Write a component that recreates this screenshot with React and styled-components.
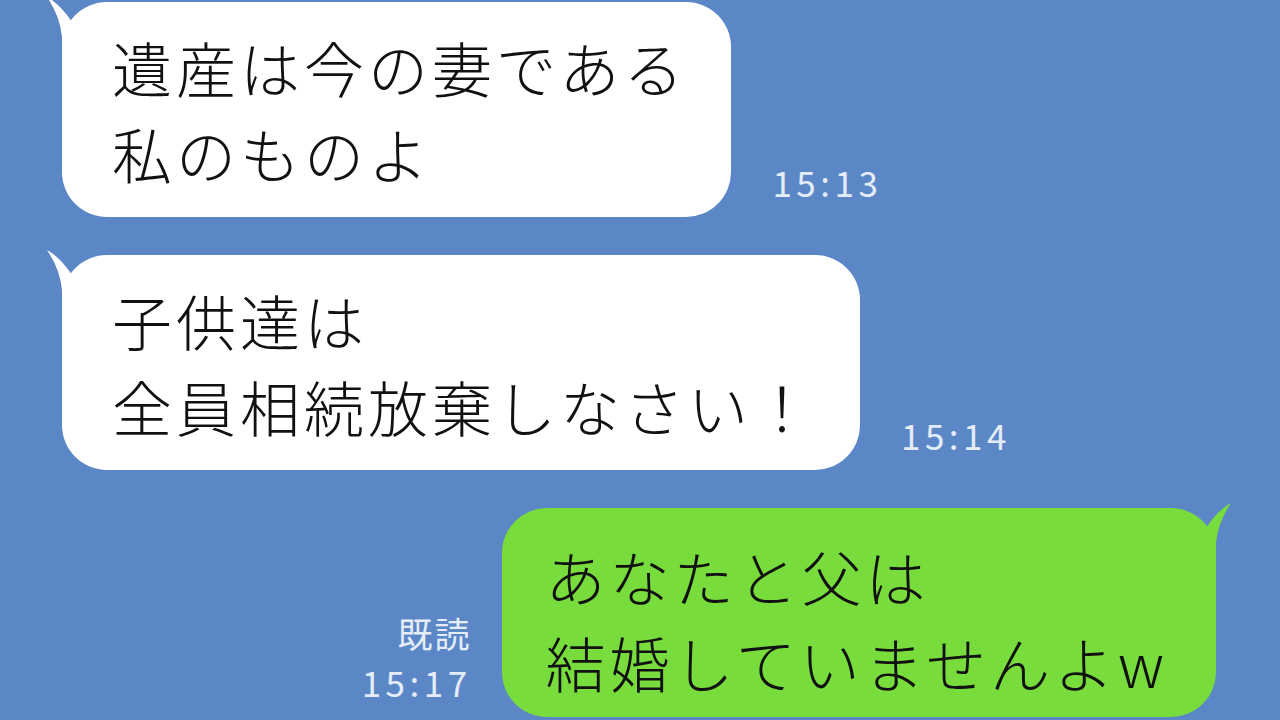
import styled, { createGlobalStyle } from "styled-components";

const GlobalStyle = createGlobalStyle`
  html, body {
    margin: 0;
    padding: 0;
    background: #5b87c7;
    overflow: hidden;
  }
  body {
    font-family: "Noto Sans CJK JP", "Noto Sans", sans-serif;
  }
`;

const Screen = styled.div`
  width: 1280px;
  height: 720px;
  overflow: hidden;
  background: #5b87c7;
  display: flex;
  flex-direction: column;
  gap: 38px;
  padding-top: 2px;
  box-sizing: border-box;
`;

const Row = styled.div`
  display: flex;
  align-items: flex-end;
  gap: ${({ $mine }) => ($mine ? "30px" : "41px")};
  justify-content: ${({ $mine }) => ($mine ? "flex-end" : "flex-start")};
  padding: ${({ $mine }) => ($mine ? "0 64px 0 0" : "0 0 0 62px")};
`;

const Bubble = styled.div`
  position: relative;
  background: ${({ $mine }) => ($mine ? "#78dc3c" : "#ffffff")};
  border-radius: 45px;
  padding: ${({ $mine }) => ($mine ? "25px 48px 12px 44px" : "22px 44px 21px 50px")};
  font-size: 60px;
  font-weight: 300;
  line-height: 86px;
  letter-spacing: 4px;
  color: #111;
  white-space: nowrap;
`;

const Tail = styled.svg`
  position: absolute;
  top: -6px;
  width: 40px;
  height: 60px;
  ${({ $mine }) =>
    $mine ? "right: -16px; transform: scaleX(-1);" : "left: -16px;"}
`;

const Meta = styled.div`
  display: flex;
  flex-direction: column;
  align-items: flex-end;
  margin-bottom: 18px;
  color: #e4ecf7;
  font-size: 35px;
  line-height: 1;
  letter-spacing: 4.5px;
`;

const Read = styled.div`
  font-size: 35px;
  margin-bottom: 14px;
  letter-spacing: 2px;
`;

const BubbleTail = ({ mine }) => (
  <Tail $mine={mine} viewBox="0 0 40 60">
    <path
      d="M1 1 Q14 8 26 26 L30 60 L16 60 L16 41 Q14 20 1 1 Z"
      fill={mine ? "#78dc3c" : "#ffffff"}
    />
  </Tail>
);

const messages = [
  { lines: ["遺産は今の妻である", "私のものよ"], time: "15:13" },
  { lines: ["子供達は", "全員相続放棄しなさい！"], time: "15:14" },
];

export default function App() {
  return (
    <>
      <GlobalStyle />
      <Screen>
        {messages.map((m) => (
          <Row key={m.time}>
            <Bubble>
              <BubbleTail />
              {m.lines.map((l) => (
                <div key={l}>{l}</div>
              ))}
            </Bubble>
            <Meta>{m.time}</Meta>
          </Row>
        ))}
        <Row $mine>
          <Meta>
            <Read>既読</Read>
            15:17
          </Meta>
          <Bubble $mine>
            <BubbleTail mine />
            <div>あなたと父は</div>
            <div>結婚していませんよw</div>
          </Bubble>
        </Row>
      </Screen>
    </>
  );
}
